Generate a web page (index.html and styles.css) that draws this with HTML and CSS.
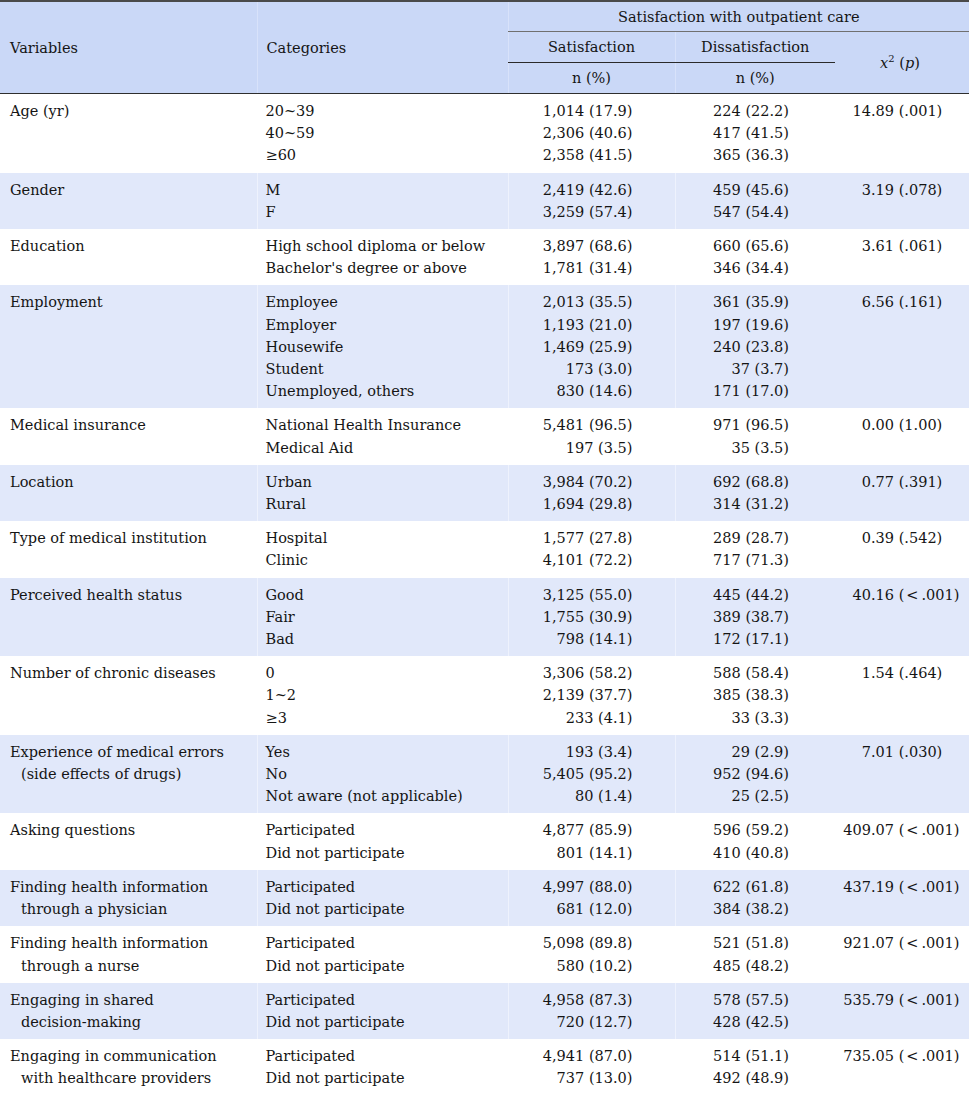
FILE: index.html
```html
<!DOCTYPE html>
<html>
<head>
<meta charset="utf-8">
<link rel="stylesheet" href="styles.css">
</head>
<body>
<table class="tbl">
  <colgroup>
    <col class="c-var"><col class="c-cat"><col class="c-sat"><col class="c-dis"><col class="c-p">
  </colgroup>
  <thead>
    <tr class="h1">
      <th rowspan="3" class="hv">Variables</th>
      <th rowspan="3" class="hc sep">Categories</th>
      <th colspan="3" class="hg sep">Satisfaction with outpatient care</th>
    </tr>
    <tr class="h2">
      <th class="hs sep">Satisfaction</th>
      <th class="hs sep">Dissatisfaction</th>
      <th rowspan="2" class="hx"><i>x</i><sup>2</sup> (<i>p</i>)</th>
    </tr>
    <tr class="h3">
      <th class="hn sep">n (%)</th>
      <th class="hn sep">n (%)</th>
    </tr>
  </thead>
  <tbody>
    <tr>
      <td class="var">Age (yr)</td>
      <td class="cat sep"><div>20~39</div><div>40~59</div><div>≥60</div></td>
      <td class="num s sep"><div>1,014 (17.9)</div><div>2,306 (40.6)</div><div>2,358 (41.5)</div></td>
      <td class="num d sep"><div>224 (22.2)</div><div>417 (41.5)</div><div>365 (36.3)</div></td>
      <td class="p"><span class="pi">14</span>.89 (.001)</td>
    </tr>
    <tr class="alt">
      <td class="var">Gender</td>
      <td class="cat sep"><div>M</div><div>F</div></td>
      <td class="num s sep"><div>2,419 (42.6)</div><div>3,259 (57.4)</div></td>
      <td class="num d sep"><div>459 (45.6)</div><div>547 (54.4)</div></td>
      <td class="p"><span class="pi">3</span>.19 (.078)</td>
    </tr>
    <tr>
      <td class="var">Education</td>
      <td class="cat sep"><div>High school diploma or below</div><div>Bachelor's degree or above</div></td>
      <td class="num s sep"><div>3,897 (68.6)</div><div>1,781 (31.4)</div></td>
      <td class="num d sep"><div>660 (65.6)</div><div>346 (34.4)</div></td>
      <td class="p"><span class="pi">3</span>.61 (.061)</td>
    </tr>
    <tr class="alt">
      <td class="var">Employment</td>
      <td class="cat sep"><div>Employee</div><div>Employer</div><div>Housewife</div><div>Student</div><div>Unemployed, others</div></td>
      <td class="num s sep"><div>2,013 (35.5)</div><div>1,193 (21.0)</div><div>1,469 (25.9)</div><div>173 (3.0)</div><div>830 (14.6)</div></td>
      <td class="num d sep"><div>361 (35.9)</div><div>197 (19.6)</div><div>240 (23.8)</div><div>37 (3.7)</div><div>171 (17.0)</div></td>
      <td class="p"><span class="pi">6</span>.56 (.161)</td>
    </tr>
    <tr>
      <td class="var">Medical insurance</td>
      <td class="cat sep"><div>National Health Insurance</div><div>Medical Aid</div></td>
      <td class="num s sep"><div>5,481 (96.5)</div><div>197 (3.5)</div></td>
      <td class="num d sep"><div>971 (96.5)</div><div>35 (3.5)</div></td>
      <td class="p"><span class="pi">0</span>.00 (1.00)</td>
    </tr>
    <tr class="alt">
      <td class="var">Location</td>
      <td class="cat sep"><div>Urban</div><div>Rural</div></td>
      <td class="num s sep"><div>3,984 (70.2)</div><div>1,694 (29.8)</div></td>
      <td class="num d sep"><div>692 (68.8)</div><div>314 (31.2)</div></td>
      <td class="p"><span class="pi">0</span>.77 (.391)</td>
    </tr>
    <tr>
      <td class="var">Type of medical institution</td>
      <td class="cat sep"><div>Hospital</div><div>Clinic</div></td>
      <td class="num s sep"><div>1,577 (27.8)</div><div>4,101 (72.2)</div></td>
      <td class="num d sep"><div>289 (28.7)</div><div>717 (71.3)</div></td>
      <td class="p"><span class="pi">0</span>.39 (.542)</td>
    </tr>
    <tr class="alt">
      <td class="var">Perceived health status</td>
      <td class="cat sep"><div>Good</div><div>Fair</div><div>Bad</div></td>
      <td class="num s sep"><div>3,125 (55.0)</div><div>1,755 (30.9)</div><div>798 (14.1)</div></td>
      <td class="num d sep"><div>445 (44.2)</div><div>389 (38.7)</div><div>172 (17.1)</div></td>
      <td class="p"><span class="pi">40</span>.16 (<span class="lt">&lt;</span>.001)</td>
    </tr>
    <tr>
      <td class="var">Number of chronic diseases</td>
      <td class="cat sep"><div>0</div><div>1~2</div><div>≥3</div></td>
      <td class="num s sep"><div>3,306 (58.2)</div><div>2,139 (37.7)</div><div>233 (4.1)</div></td>
      <td class="num d sep"><div>588 (58.4)</div><div>385 (38.3)</div><div>33 (3.3)</div></td>
      <td class="p"><span class="pi">1</span>.54 (.464)</td>
    </tr>
    <tr class="alt">
      <td class="var">Experience of medical errors<span class="cont">(side effects of drugs)</span></td>
      <td class="cat sep"><div>Yes</div><div>No</div><div>Not aware (not applicable)</div></td>
      <td class="num s sep"><div>193 (3.4)</div><div>5,405 (95.2)</div><div>80 (1.4)</div></td>
      <td class="num d sep"><div>29 (2.9)</div><div>952 (94.6)</div><div>25 (2.5)</div></td>
      <td class="p"><span class="pi">7</span>.01 (.030)</td>
    </tr>
    <tr>
      <td class="var">Asking questions</td>
      <td class="cat sep"><div>Participated</div><div>Did not participate</div></td>
      <td class="num s sep"><div>4,877 (85.9)</div><div>801 (14.1)</div></td>
      <td class="num d sep"><div>596 (59.2)</div><div>410 (40.8)</div></td>
      <td class="p"><span class="pi">409</span>.07 (<span class="lt">&lt;</span>.001)</td>
    </tr>
    <tr class="alt">
      <td class="var">Finding health information<span class="cont">through a physician</span></td>
      <td class="cat sep"><div>Participated</div><div>Did not participate</div></td>
      <td class="num s sep"><div>4,997 (88.0)</div><div>681 (12.0)</div></td>
      <td class="num d sep"><div>622 (61.8)</div><div>384 (38.2)</div></td>
      <td class="p"><span class="pi">437</span>.19 (<span class="lt">&lt;</span>.001)</td>
    </tr>
    <tr>
      <td class="var">Finding health information<span class="cont">through a nurse</span></td>
      <td class="cat sep"><div>Participated</div><div>Did not participate</div></td>
      <td class="num s sep"><div>5,098 (89.8)</div><div>580 (10.2)</div></td>
      <td class="num d sep"><div>521 (51.8)</div><div>485 (48.2)</div></td>
      <td class="p"><span class="pi">921</span>.07 (<span class="lt">&lt;</span>.001)</td>
    </tr>
    <tr class="alt">
      <td class="var">Engaging in shared<span class="cont">decision-making</span></td>
      <td class="cat sep"><div>Participated</div><div>Did not participate</div></td>
      <td class="num s sep"><div>4,958 (87.3)</div><div>720 (12.7)</div></td>
      <td class="num d sep"><div>578 (57.5)</div><div>428 (42.5)</div></td>
      <td class="p"><span class="pi">535</span>.79 (<span class="lt">&lt;</span>.001)</td>
    </tr>
    <tr>
      <td class="var">Engaging in communication<span class="cont">with healthcare providers</span></td>
      <td class="cat sep"><div>Participated</div><div>Did not participate</div></td>
      <td class="num s sep"><div>4,941 (87.0)</div><div>737 (13.0)</div></td>
      <td class="num d sep"><div>514 (51.1)</div><div>492 (48.9)</div></td>
      <td class="p"><span class="pi">735</span>.05 (<span class="lt">&lt;</span>.001)</td>
    </tr>
  </tbody>
</table>
</body>
</html>
```

FILE: styles.css
```css
html, body {
  margin: 0;
  padding: 0;
  background: #ffffff;
}

.tbl {
  width: 969px;
  border-collapse: collapse;
  table-layout: fixed;
  font-family: "DejaVu Serif", "Liberation Serif", serif;
  font-size: 14.5px;
  color: #151515;
  border-top: 2px solid #4a4a4a;
  border-bottom: 2px solid #4a4a4a;
}

.c-var { width: 257px; }
.c-cat { width: 251px; }
.c-sat { width: 167px; }
.c-dis { width: 160px; }
.c-p { width: 134px; }

.tbl thead th {
  background: #cad8f7;
  font-weight: normal;
  padding: 0;
  line-height: 20px;
}

.tbl thead tr.h1 th { height: 29px; }
.tbl thead tr.h2 th { height: 30px; }
.tbl thead tr.h3 th { height: 30px; }

.tbl thead tr:last-child th,
.tbl thead th.hv,
.tbl thead th.hc,
.tbl thead th.hx {
  border-bottom: 1px solid #2e2e2e;
}

.hv {
  text-align: left;
  padding-left: 10px !important;
}

.hc {
  text-align: left;
  padding-left: 9px !important;
}

.hg {
  text-align: center;
  border-bottom: 1px solid #707070;
}

.hs {
  text-align: center;
  border-bottom: 1px solid #2a2a2a;
}

.hn { text-align: center; }

.hx {
  text-align: center;
  padding-right: 4px !important;
}

.hx sup {
  font-size: 10px;
  line-height: 0;
  vertical-align: 6px;
}

.tbl thead th.sep {
  border-left: 1px solid #d8e2fa;
}

.tbl tbody td {
  vertical-align: top;
  padding: 6px 0;
  line-height: 22.2px;
}

.tbl tbody tr.alt td {
  background: #e1e8fa;
}

.tbl tbody tr.alt td.sep {
  border-left: 1px solid #eef2fd;
}

.tbl tbody tr td.sep {
  border-left: 1px solid #ffffff;
}

.var {
  padding-left: 10px !important;
}

.cont {
  display: block;
  padding-left: 11px;
}

.cat {
  padding-left: 8px !important;
}

.num { text-align: right; }
.num.s { padding-right: 42px !important; }
.num.d { padding-right: 46px !important; }

.p {
  padding-left: 6px !important;
  white-space: nowrap;
}

.pi {
  display: inline-block;
  width: 30px;
  text-align: right;
}

.lt {
  margin: 0 3px 0 2px;
}
```
